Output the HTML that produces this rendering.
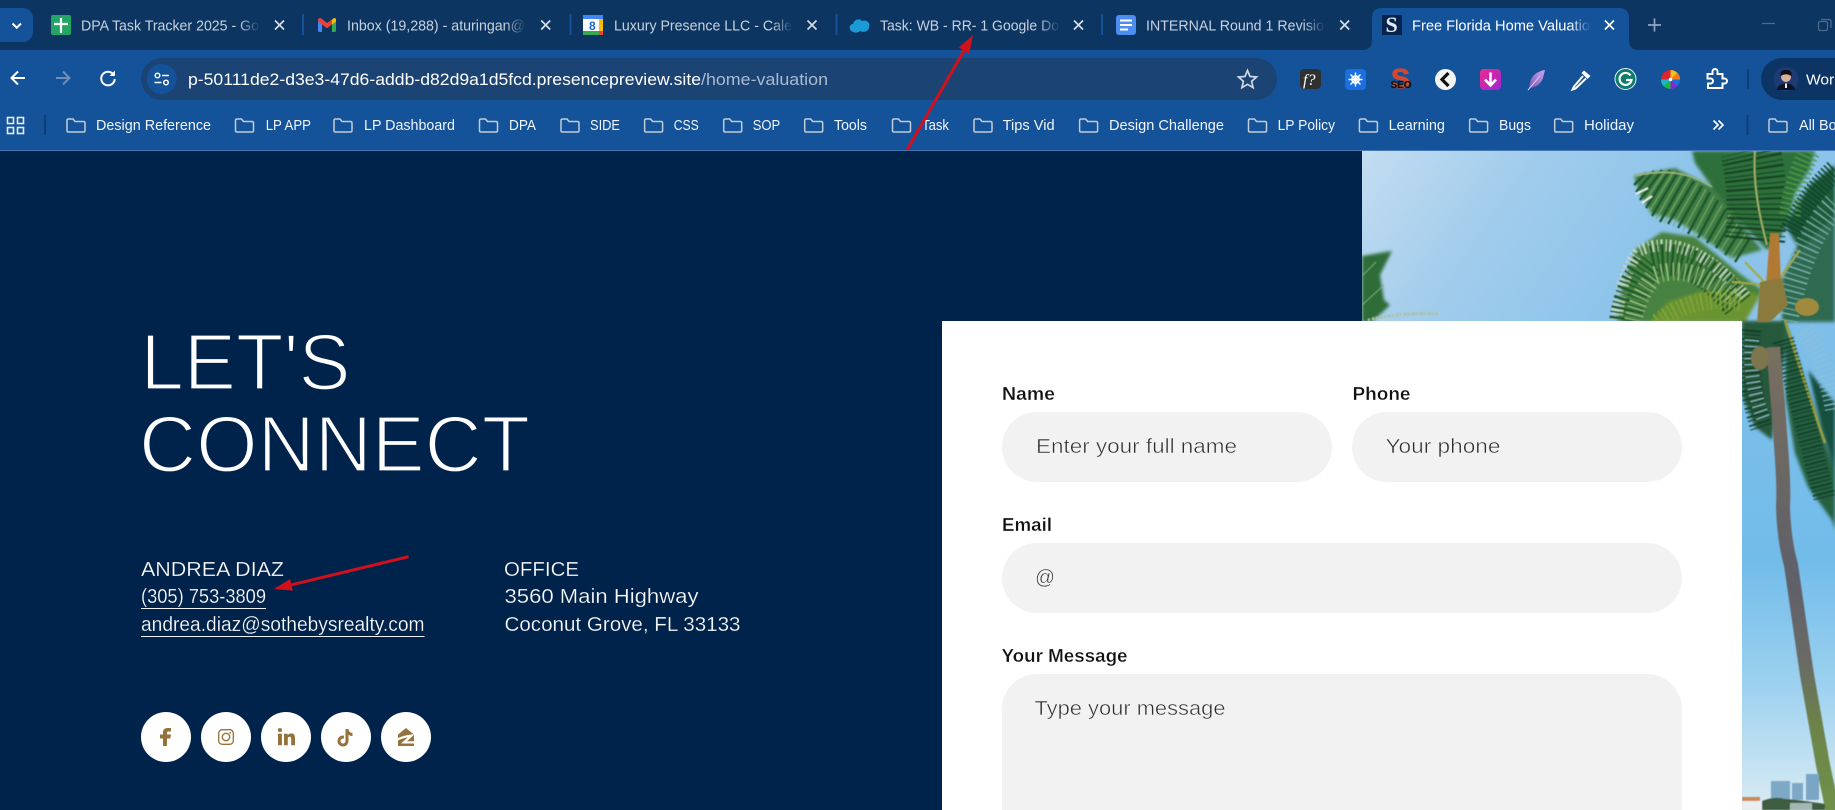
<!DOCTYPE html>
<html lang="en"><head><meta charset="utf-8"><title>Free Florida Home Valuation</title>
<style>
html,body{margin:0;padding:0;background:#00234b;width:1835px;height:810px;overflow:hidden}
svg{display:block;position:absolute;left:0;top:0}
text{font-family:"Liberation Sans","DejaVu Sans",sans-serif;white-space:pre}
.tab{font-size:14.5px;fill:#c6d1dd}
.bm{font-size:14.5px;fill:#f2f5f9}
.ct{font-size:20px;fill:#fff;stroke:#00234b;stroke-width:.25px}
.lb{font-size:18px;fill:#111;font-weight:bold;stroke:#fff;stroke-width:.3px}
.ph{font-size:20px;fill:#2e2e2e;stroke:#f2f2f2;stroke-width:.5px}
.h1{font-size:80px;fill:#fff;stroke:#00234b;stroke-width:2.2px}
</style></head><body>
<svg width="1835" height="810" viewBox="0 0 1835 810" xmlns="http://www.w3.org/2000/svg">
<defs>
<filter id="b" x="-10%" y="-10%" width="120%" height="120%"><feGaussianBlur stdDeviation=".6"/></filter>
<filter id="b2" x="-10%" y="-10%" width="120%" height="120%"><feGaussianBlur stdDeviation="1.6"/></filter>
<linearGradient id="sky1" gradientUnits="userSpaceOnUse" x1="1362" y1="150" x2="1620" y2="322"><stop offset="0" stop-color="#c4ddf1"/><stop offset=".45" stop-color="#a2cdec"/><stop offset="1" stop-color="#8bc3ea"/></linearGradient>
<linearGradient id="sky2" gradientUnits="userSpaceOnUse" x1="0" y1="321" x2="0" y2="800"><stop offset="0" stop-color="#7fbfe9"/><stop offset=".5" stop-color="#72bcea"/><stop offset=".75" stop-color="#9bd0ef"/><stop offset="1" stop-color="#d4e9f3"/></linearGradient>
<linearGradient id="trunk" gradientUnits="userSpaceOnUse" x1="0" y1="340" x2="0" y2="810"><stop offset="0" stop-color="#7a7060"/><stop offset=".5" stop-color="#5f6068"/><stop offset=".68" stop-color="#6a6a66"/><stop offset=".82" stop-color="#6d8348"/><stop offset="1" stop-color="#6f9148"/></linearGradient>
<linearGradient id="fadeA" x1="0" x2="1"><stop offset="0" stop-color="#0d3561" stop-opacity="0"/><stop offset="1" stop-color="#0d3561"/></linearGradient>
<linearGradient id="fadeB" x1="0" x2="1"><stop offset="0" stop-color="#14529a" stop-opacity="0"/><stop offset="1" stop-color="#14529a"/></linearGradient>
<linearGradient id="pink" x1="0" y1="0" x2="1" y2="1"><stop offset="0" stop-color="#ee2a8e"/><stop offset="1" stop-color="#a024d4"/></linearGradient>
<linearGradient id="fth" x1="1" y1="0" x2="0" y2="1"><stop offset="0" stop-color="#c9a8ee"/><stop offset="1" stop-color="#7a55b8"/></linearGradient>
<clipPath id="photo"><rect x="1362" y="151" width="473" height="659"/></clipPath>
<symbol id="fd" viewBox="0 0 20 15" width="20" height="15"><path d="M1 2.5Q1 1 2.5 1H7L9 3.5H17.5Q19 3.5 19 5V12.5Q19 14 17.5 14H2.5Q1 14 1 12.5Z" fill="none" stroke="#c4ccd6" stroke-width="1.5"/></symbol>
<symbol id="x" viewBox="0 0 12 12" width="12" height="12"><path d="M1.5 1.5L10.5 10.5M10.5 1.5L1.5 10.5" stroke="currentColor" stroke-width="1.7" fill="none"/></symbol>
</defs>

<!-- page background -->
<rect width="1835" height="810" fill="#00234b"/>

<!-- photo -->
<g clip-path="url(#photo)">
<rect x="1362" y="150" width="473" height="172" fill="url(#sky1)"/>
<rect x="1742" y="321" width="93" height="489" fill="url(#sky2)"/>
<g filter="url(#b2)">
 <path d="M1692 151H1815L1809 170 1795 193 1789 217 1779 240 1767 250 1755 237 1735 217 1712 187 1695 163Z" fill="#2d6f3a"/>
 <path d="M1762 250L1712 187 1675 168 1634 176 1640 194 1652 214 1672 218 1695 232 1732 258Z" fill="#3f7d45"/>
 <path d="M1762 290L1739 273 1695 237 1662 232 1635 250 1622 290 1617 322H1745Z" fill="#47823f"/>
 <path d="M1650 322L1668 302 1705 290 1739 288 1760 296 1745 322Z" fill="#6b9433"/>
 <path d="M1782 322V280L1800 240 1835 205V322Z" fill="#2f6a50"/>
 <path d="M1785 225L1810 185 1835 165V215L1800 250Z" fill="#1f5a38"/>
 <path d="M1362 256L1392 251 1380 275 1384 300 1390 305 1372 322H1362Z" fill="#2f6c38"/>
 <path d="M1742 321H1785V350L1778 390 1772 440 1755 427 1742 395Z" fill="#28583a"/>
 <path d="M1785 321L1802 370 1825 443 1835 470V530L1832 520 1808 487 1795 453 1786 400Z" fill="#27603f"/>
 <path d="M1808 370L1835 403V470L1822 430Z" fill="#17503e"/>
</g>
<g filter="url(#b)" fill="none">
 <!-- upper-left frond leaflets -->
 <path d="M1750 238L1735 262M1742 228L1725 255M1734 218L1716 248M1726 209L1707 243M1718 200L1698 238M1710 192L1688 234M1702 186L1678 228M1694 181L1668 224M1686 176L1660 222M1678 172L1652 216M1670 170L1646 208M1662 170L1640 200M1654 171L1636 192M1646 173L1634 185" stroke="#1b572b" stroke-width="2.4"/>
 <path d="M1746 233L1730 258M1738 223L1720 251M1730 214L1711 245M1722 205L1702 240M1714 196L1693 236M1706 189L1683 231M1698 183L1673 226M1690 178L1664 223M1682 174L1656 219M1674 171L1649 212M1666 170L1643 204" stroke="#79ad68" stroke-width="1.1"/>
 <path d="M1712 187Q1680 165 1634 176" stroke="#9fb878" stroke-width="1.6"/>
 <path d="M1648 188L1636 194M1652 196L1642 203" stroke="#eef4f0" stroke-width="2"/>
 <path d="M1755 240Q1760 190 1750 150" stroke="#123f22" stroke-width="60" stroke-dasharray="2 3 1 4"/>
 <path d="M1790 215Q1795 180 1810 150" stroke="#4f9a4a" stroke-width="22" stroke-dasharray="1.5 3.5"/>
 <path d="M1745 296Q1690 230 1640 250Q1622 270 1616 322" stroke="#c7dac0" stroke-width="12" stroke-dasharray="1.2 3 2 2.5"/>
 <path d="M1738 305Q1695 250 1650 262Q1630 285 1625 322" stroke="#1f5a2a" stroke-width="32" stroke-dasharray="1.5 3 2.5 2.5"/>
 <path d="M1735 300Q1695 262 1655 275Q1638 295 1633 322" stroke="#a0c488" stroke-width="18" stroke-dasharray="1 5 1.5 4"/>
 <path d="M1740 302Q1695 294 1658 322" stroke="#86a838" stroke-width="18" stroke-dasharray="1.5 3 1 4"/>
 <path d="M1835 205Q1800 240 1785 322" stroke="#7fb2b4" stroke-width="26" stroke-dasharray="1 4 1.5 5"/>
 <path d="M1835 170Q1808 195 1790 232" stroke="#0f4229" stroke-width="22" stroke-dasharray="1.5 2.5"/>
 <path d="M1755 150Q1752 190 1767 245" stroke="#a8b36a" stroke-width="1.8"/>
 <path d="M1767 285L1745 262M1767 285L1732 282M1775 285L1800 250" stroke="#a8a840" stroke-width="2"/>
 <path d="M1785 320Q1800 370 1825 443" stroke="#98a03a" stroke-width="2.5"/>
 <path d="M1783 340Q1800 400 1825 500" stroke="#0d3a2a" stroke-width="22" stroke-dasharray="1.5 2.4 1 3"/>
 <path d="M1805 330Q1826 360 1835 410" stroke="#8fc0d4" stroke-width="20" stroke-dasharray="1.4 3.5 1 4"/>
 <path d="M1750 330Q1745 380 1762 430" stroke="#0f3822" stroke-width="22" stroke-dasharray="1.5 2.5 1 3.5"/>
 <path d="M1752 340Q1748 380 1764 420" stroke="#a6cfe4" stroke-width="14" stroke-dasharray="1 5"/>
 <path d="M1376 262L1362 276M1384 285L1362 305" stroke="#7fae7c" stroke-width="1"/>
 <path d="M1368 320Q1400 312 1438 314" stroke="#a9c2a6" stroke-width="3" stroke-dasharray="2 2 3 1"/>
</g>
<g filter="url(#b)">
 <path d="M1773 347Q1778 400 1782 460Q1784 490 1783 507Q1784 540 1791 565L1807 675 1823 765 1833 812" fill="none" stroke="url(#trunk)" stroke-width="14"/>
 <path d="M1770 233H1779L1781 285H1766Z" fill="#b07a35"/>
 <path d="M1760 282L1782 278 1788 305 1770 322H1757Z" fill="#8a7a3c"/>
 <ellipse cx="1807" cy="307" rx="12" ry="9" fill="#a08a3c"/>
 <ellipse cx="1760" cy="358" rx="9" ry="12" fill="#7d7650"/>
 <rect x="1771" y="781" width="19" height="19" fill="#7da8c6"/>
 <rect x="1792" y="783" width="11" height="17" fill="#7da8c6"/>
 <rect x="1806" y="774" width="13" height="26" fill="#7aa5c5"/>
 <rect x="1742" y="797" width="18" height="4" fill="#c98a5a"/>
 <rect x="1742" y="801" width="24" height="9" fill="#e8eef2"/>
 <path d="M1762 810V801Q1775 796 1785 799Q1800 800 1825 804V810Z" fill="#3e5c3f"/>
 <rect x="1790" y="803" width="22" height="7" fill="#cfdde5" opacity=".7"/>
</g>
</g>

<!-- form card -->
<rect x="942" y="321" width="800" height="489" fill="#fff"/>
<rect x="1002" y="412" width="330" height="70" rx="35" fill="#f2f2f2"/>
<rect x="1352" y="412" width="330" height="70" rx="35" fill="#f2f2f2"/>
<rect x="1002" y="543" width="680" height="70" rx="35" fill="#f2f2f2"/>
<path d="M1002 810V709A35 35 0 0 1 1037 674H1647A35 35 0 0 1 1682 709V810Z" fill="#f2f2f2"/>
<text class="lb" x="1002" y="400" textLength="53" lengthAdjust="spacingAndGlyphs">Name</text>
<text class="lb" x="1352.5" y="400" textLength="58" lengthAdjust="spacingAndGlyphs">Phone</text>
<text class="lb" x="1002" y="531" textLength="50" lengthAdjust="spacingAndGlyphs">Email</text>
<text class="lb" x="1001.5" y="662" textLength="126" lengthAdjust="spacingAndGlyphs">Your Message</text>
<text class="ph" x="1036" y="453" textLength="201" lengthAdjust="spacingAndGlyphs">Enter your full name</text>
<text class="ph" x="1385.5" y="453" textLength="115" lengthAdjust="spacingAndGlyphs">Your phone</text>
<text class="ph" x="1035" y="584" textLength="20" lengthAdjust="spacingAndGlyphs">@</text>
<text class="ph" x="1034.5" y="715" textLength="191" lengthAdjust="spacingAndGlyphs">Type your message</text>

<!-- left content -->
<text class="h1" x="140.5" y="389.5" textLength="210" lengthAdjust="spacingAndGlyphs">LET'S</text>
<text class="h1" x="139" y="471.5" textLength="391" lengthAdjust="spacingAndGlyphs">CONNECT</text>
<text class="ct" x="141" y="576" textLength="143" lengthAdjust="spacingAndGlyphs">ANDREA DIAZ</text>
<text class="ct" x="141" y="603" textLength="125" lengthAdjust="spacingAndGlyphs">(305) 753-3809</text>
<rect x="141" y="608" width="125" height="1" fill="#eef0f2"/>
<text class="ct" x="141" y="631" textLength="283.5" lengthAdjust="spacingAndGlyphs">andrea.diaz@sothebysrealty.com</text>
<rect x="141" y="636" width="283.5" height="1" fill="#eef0f2"/>
<text class="ct" x="504" y="576" textLength="75" lengthAdjust="spacingAndGlyphs">OFFICE</text>
<text class="ct" x="504.5" y="603" textLength="194" lengthAdjust="spacingAndGlyphs">3560 Main Highway</text>
<text class="ct" x="504.5" y="631" textLength="236" lengthAdjust="spacingAndGlyphs">Coconut Grove, FL 33133</text>

<!-- social -->
<g fill="#fff"><circle cx="166" cy="737" r="25"/><circle cx="226" cy="737" r="25"/><circle cx="286" cy="737" r="25"/><circle cx="346" cy="737" r="25"/><circle cx="406" cy="737" r="25"/></g>
<g fill="#96713a">
<path d="M163 746V738.5H160V734.5H163V732.5C163 729.5 165 728 167.5 728H171V731.5H168.5C167.5 731.5 167 732 167 733V734.5H171L170.3 738.5H167V746Z"/>
<g fill="none" stroke="#96713a" stroke-width="1.3"><rect x="218.7" y="729.7" width="14.6" height="14.6" rx="3.6"/><circle cx="226" cy="737" r="3.7"/></g><circle cx="230.2" cy="732.8" r=".9"/>
<rect x="278" y="733.7" width="3.9" height="11.5"/><rect x="278" y="728.2" width="3.9" height="3.7" rx="1"/>
<path d="M284 733.7H287.7V735.4C288.5 734.2 289.8 733.4 291.3 733.4C294.2 733.4 295 735.4 295 738.3V745.2H291.2V739.2C291.2 737.7 290.8 736.7 289.6 736.7C288.2 736.7 287.8 737.8 287.8 739.3V745.2H284Z"/>
<path d="M345.5 729H348.5C348.7 731.4 350.3 732.9 352.5 733V736C351 736 349.6 735.5 348.5 734.7V741A5.5 5.5 0 1 1 343 735.5C343.3 735.5 343.6 735.5 343.9 735.6V738.7A2.5 2.5 0 1 0 345.5 741Z"/>
<path d="M406 728L414 734.6V746H398V734.6Z"/>
<path d="M395 740.6Q403 736.4 411.5 735.6L404 742.4H417" fill="none" stroke="#fff" stroke-width="2.3"/>
</g>

<!-- browser chrome -->
<rect width="1835" height="50" fill="#0d3561"/>
<rect y="50" width="1835" height="100" fill="#14529a"/>
<rect y="150" width="1835" height="1" fill="#4377b8"/>
<path d="M0 8H23A10 10 0 0 1 33 18V32A10 10 0 0 1 23 42H0Z" fill="#14529a"/>
<path d="M12.5 23.5L16.7 27.7 21 23.5" fill="none" stroke="#fff" stroke-width="2"/>

<!-- active tab -->
<path d="M1362 50Q1372 50 1372 40V18Q1372 8 1382 8H1619Q1629 8 1629 18V40Q1629 50 1639 50Z" fill="#14529a"/>

<g fill="#14529a"><rect x="302" y="14" width="2" height="21"/><rect x="569.5" y="14" width="2" height="21"/><rect x="835.5" y="14" width="2" height="21"/><rect x="1101" y="14" width="2" height="21"/></g>

<!-- favicons -->
<rect x="51" y="15" width="20" height="20" rx="2" fill="#23a566"/><path d="M61 18V33M54 24H68" stroke="#fff" stroke-width="2.2"/>
<path d="M318 20.5H322V32H319.5Q318 32 318 30.5Z" fill="#4285f4"/><path d="M332 20.5H336V30.5Q336 32 334.5 32H332Z" fill="#34a853"/>
<path d="M318 21.5V19Q319.5 17.5 321.5 18.6L327 23 332 19.5 332 24.5 327 28.2Z" fill="#ea4335"/><path d="M332 19.5L333 18.6Q335 17.5 336 19V21.5L332 24.5Z" fill="#fbbc04"/>
<rect x="583" y="15" width="20" height="20" rx="2" fill="#fff"/><rect x="583" y="15" width="20" height="4" fill="#4285f4"/><rect x="583" y="31" width="16" height="4" fill="#34a853"/><rect x="599" y="19" width="4" height="12" fill="#fbbc04"/><rect x="599" y="31" width="4" height="4" fill="#ea4335"/>
<text x="589" y="30" style="font-size:12px;font-weight:bold;fill:#1a66d2">8</text>
<path d="M853 32C848 30 849 24 853 24C854 19 860 18 862 21C866 19 871 23 869 27C869 31 864 33 860 31C858 33 855 33 853 32Z" fill="#1a9bd7"/>
<rect x="1116" y="15" width="20" height="20" rx="3" fill="#4f8cf0"/><path d="M1120 20.5H1132M1120 25H1132M1120 29.5H1128" stroke="#fff" stroke-width="2"/>
<rect x="1382" y="15" width="20" height="20" fill="#06244e"/><text x="1385.5" y="32" style="font-family:'Liberation Serif',serif;font-size:22px;font-weight:bold;fill:#e6ebf2">S</text>

<!-- tab titles -->
<text class="tab" x="81" y="30.5" textLength="178" lengthAdjust="spacingAndGlyphs">DPA Task Tracker 2025 - Go</text>
<text class="tab" x="347" y="30.5" textLength="178" lengthAdjust="spacingAndGlyphs">Inbox (19,288) - aturingan@</text>
<text class="tab" x="614" y="30.5" textLength="178" lengthAdjust="spacingAndGlyphs">Luxury Presence LLC - Cale</text>
<text class="tab" x="880" y="30.5" textLength="179" lengthAdjust="spacingAndGlyphs">Task: WB - RR- 1 Google Do</text>
<text class="tab" x="1146" y="30.5" textLength="178" lengthAdjust="spacingAndGlyphs">INTERNAL Round 1 Revisio</text>
<text class="tab" x="1412" y="30.5" textLength="178" lengthAdjust="spacingAndGlyphs" style="fill:#fff">Free Florida Home Valuatio</text>
<rect x="239" y="15" width="21" height="22" fill="url(#fadeA)"/><rect x="505" y="15" width="21" height="22" fill="url(#fadeA)"/><rect x="772" y="15" width="21" height="22" fill="url(#fadeA)"/><rect x="1039" y="15" width="21" height="22" fill="url(#fadeA)"/><rect x="1304" y="15" width="21" height="22" fill="url(#fadeA)"/><rect x="1570" y="15" width="21" height="22" fill="url(#fadeB)"/>
<g style="color:#d5dde6">
<use href="#x" x="273.5" y="19"/><use href="#x" x="539.7" y="19"/><use href="#x" x="806" y="19"/><use href="#x" x="1072.5" y="19"/><use href="#x" x="1338.7" y="19"/></g>
<use href="#x" x="1603.4" y="19" style="color:#fff"/>
<path d="M1654.5 18.5V31.5M1648 25H1661" stroke="#8ea6c2" stroke-width="1.7"/>
<path d="M1762 23.5H1775" stroke="#4d6b8e" stroke-width="1.2"/>
<g fill="none" stroke="#4d6b8e" stroke-width="1.2"><rect x="1818.5" y="21.5" width="9" height="9" rx="1.5"/><path d="M1821 19.5H1829Q1831 19.5 1831 21.5V28"/></g>

<!-- toolbar -->
<path d="M25 78H12M18 71.5L11.5 78 18 84.5" fill="none" stroke="#fff" stroke-width="2"/>
<path d="M56 78H69M63 71.5L69.5 78 63 84.5" fill="none" stroke="#6f8fb8" stroke-width="2"/>
<path d="M113.5 74.5A6.8 6.8 0 1 0 114.8 79" fill="none" stroke="#fff" stroke-width="2"/><path d="M115 70.5V76H109.5Z" fill="#fff"/>
<rect x="141" y="58" width="1136" height="42" rx="21" fill="#1b4373"/>
<circle cx="161.7" cy="79" r="15" fill="#14529a"/>
<g fill="none" stroke="#fff" stroke-width="1.5"><circle cx="157.5" cy="75.5" r="2.3"/><path d="M162 75.5H169"/><circle cx="166" cy="82.5" r="2.3"/><path d="M154.5 82.5H161.5"/></g>
<text x="188" y="85" textLength="513" lengthAdjust="spacingAndGlyphs" style="font-size:17px;fill:#fff">p-50111de2-d3e3-47d6-addb-d82d9a1d5fcd.presencepreview.site</text>
<text x="701" y="85" textLength="127" lengthAdjust="spacingAndGlyphs" style="font-size:17px;fill:#a8bbd0">/home-valuation</text>
<path d="M1247.5 70.5L1250 76.5 1256.5 77 1251.6 81.3 1253.1 87.6 1247.5 84.3 1241.9 87.6 1243.4 81.3 1238.5 77 1245 76.5Z" fill="none" stroke="#cfd8e3" stroke-width="1.7"/>

<!-- extensions -->
<rect x="1300" y="69" width="21" height="20" rx="4" fill="#2f3032"/>
<text x="1303" y="85" style="font-family:'Liberation Serif',serif;font-style:italic;font-size:16px;fill:#fff">f?</text>
<rect x="1345" y="69" width="21" height="21" rx="4" fill="#1c6fe3"/>
<g stroke="#fff" stroke-width="1.5" fill="none"><circle cx="1355.5" cy="79.5" r="3.6"/><path d="M1355.5 72.5V86.5M1348.5 79.5H1362.5M1350.5 74.5L1360.5 84.5M1360.5 74.5L1350.5 84.5"/></g>
<text x="1391" y="88" textLength="19" lengthAdjust="spacingAndGlyphs" style="font-size:28px;font-weight:bold;fill:#d5472f;stroke:#d5472f;stroke-width:.8px">S</text>
<text x="1390.5" y="88" textLength="21" lengthAdjust="spacingAndGlyphs" style="font-size:10.5px;font-weight:bold;fill:#111;stroke:#111;stroke-width:.3px">SEO</text>
<circle cx="1445.5" cy="79.5" r="10.5" fill="#f4f4f4"/><path d="M1448.5 73L1442 79.5 1448.5 86" fill="none" stroke="#111" stroke-width="3.2"/>
<rect x="1480" y="69" width="21" height="21" rx="4" fill="url(#pink)"/><path d="M1490.5 72.5V84.5M1485 79.5L1490.5 85.5 1496 79.5" fill="none" stroke="#fff" stroke-width="2.5"/>
<path d="M1545 70C1538 71 1532 75 1530 82L1529 88C1535 88 1541 84 1543 78Z" fill="url(#fth)"/><path d="M1528 90L1540 76" stroke="#d9c4f2" stroke-width="1"/>
<g fill="none" stroke="#fff" stroke-width="2"><path d="M1583 76L1574 86.5 1572.5 89.5 1575.5 88.5 1586 78.5"/></g><path d="M1584 70.5L1590.5 76 1587.5 79 1581.5 73Z" fill="#fff"/>
<circle cx="1625.5" cy="79" r="10.5" fill="#0f7b6c" stroke="#e6f1ee" stroke-width="1"/><path d="M1630.5 75.5A6 6 0 1 0 1631.5 80H1626" fill="none" stroke="#fff" stroke-width="2.2"/>
<g><path d="M1670.5 79.5V70A9.5 9.5 0 0 1 1680 79.5Z" fill="#f2c21a"/><path d="M1670.5 79.5H1680A9.5 9.5 0 0 1 1670.5 89Z" fill="#1a6fe0"/><path d="M1670.5 79.5V89A9.5 9.5 0 0 1 1661 79.5Z" fill="#19b84a"/><path d="M1670.5 79.5H1661A9.5 9.5 0 0 1 1670.5 70Z" fill="#e0242e"/><path d="M1670.5 79.5L1677.2 72.8A9.5 9.5 0 0 1 1680 79.5Z" fill="#f47a1a"/><path d="M1670.5 79.5L1663.8 86.2A9.5 9.5 0 0 1 1661 79.5Z" fill="#1fb5c9"/><path d="M1670.5 79.5L1677.2 86.2A9.5 9.5 0 0 1 1670.5 89Z" fill="#8a28c8"/><circle cx="1670.5" cy="79.5" r="1.8" fill="#fff"/></g>
<path d="M1707.5 74H1712.5V71.5A2.3 2.3 0 0 1 1717.5 71.5V74H1722.5V78.5H1724.5A2.3 2.3 0 0 1 1724.5 83.5H1722.5V88H1708V83.5H1710.5A2.3 2.3 0 0 0 1710.5 78.5H1707.5Z" fill="none" stroke="#fff" stroke-width="2"/>
<rect x="1747" y="69" width="2" height="20" fill="#0f3d74"/>
<path d="M1835 58H1782A21 21 0 0 0 1782 100H1835Z" fill="#0c3565"/>
<circle cx="1786" cy="79" r="12.5" fill="#1d3a72"/>
<circle cx="1786" cy="77" r="5" fill="#d9b298"/><path d="M1780.5 76Q1780 69.5 1786 70Q1792 69.5 1791.5 76Q1786 72.5 1780.5 76Z" fill="#0f0f14"/>
<path d="M1777 90Q1778 83.5 1786 83.5Q1794 83.5 1795 90Z" fill="#0d1424"/><path d="M1785 83.5H1787V88H1785Z" fill="#e9edf2"/>
<text x="1806" y="84.5" textLength="36" lengthAdjust="spacingAndGlyphs" style="font-size:15px;fill:#fff">Work</text>

<!-- bookmarks -->
<g fill="none" stroke="#e6ebf2" stroke-width="1.6"><rect x="7.5" y="117.5" width="6" height="6"/><rect x="17.5" y="117.5" width="6" height="6"/><rect x="7.5" y="127.5" width="6" height="6"/><rect x="17.5" y="127.5" width="6" height="6"/></g>
<rect x="44" y="115" width="2" height="20" fill="#0f3d74"/>
<use href="#fd" x="66" y="118"/><text class="bm" x="96" y="130" textLength="115" lengthAdjust="spacingAndGlyphs">Design Reference</text>
<use href="#fd" x="234.5" y="118"/><text class="bm" x="265.7" y="130" textLength="45.3" lengthAdjust="spacingAndGlyphs">LP APP</text>
<use href="#fd" x="333" y="118"/><text class="bm" x="364" y="130" textLength="91" lengthAdjust="spacingAndGlyphs">LP Dashboard</text>
<use href="#fd" x="478.5" y="118"/><text class="bm" x="509" y="130" textLength="27" lengthAdjust="spacingAndGlyphs">DPA</text>
<use href="#fd" x="560" y="118"/><text class="bm" x="590" y="130" textLength="30" lengthAdjust="spacingAndGlyphs">SIDE</text>
<use href="#fd" x="643.6" y="118"/><text class="bm" x="673.7" y="130" textLength="25" lengthAdjust="spacingAndGlyphs">CSS</text>
<use href="#fd" x="722.7" y="118"/><text class="bm" x="752.7" y="130" textLength="27.5" lengthAdjust="spacingAndGlyphs">SOP</text>
<use href="#fd" x="803.7" y="118"/><text class="bm" x="834" y="130" textLength="33" lengthAdjust="spacingAndGlyphs">Tools</text>
<use href="#fd" x="891.5" y="118"/><text class="bm" x="922" y="130" textLength="27" lengthAdjust="spacingAndGlyphs">Task</text>
<use href="#fd" x="973" y="118"/><text class="bm" x="1002.6" y="130" textLength="52" lengthAdjust="spacingAndGlyphs">Tips Vid</text>
<use href="#fd" x="1078.6" y="118"/><text class="bm" x="1109" y="130" textLength="115" lengthAdjust="spacingAndGlyphs">Design Challenge</text>
<use href="#fd" x="1247.5" y="118"/><text class="bm" x="1277.6" y="130" textLength="57.4" lengthAdjust="spacingAndGlyphs">LP Policy</text>
<use href="#fd" x="1358.4" y="118"/><text class="bm" x="1388.6" y="130" textLength="56.4" lengthAdjust="spacingAndGlyphs">Learning</text>
<use href="#fd" x="1468.6" y="118"/><text class="bm" x="1499" y="130" textLength="32" lengthAdjust="spacingAndGlyphs">Bugs</text>
<use href="#fd" x="1553.7" y="118"/><text class="bm" x="1584" y="130" textLength="50" lengthAdjust="spacingAndGlyphs">Holiday</text>
<path d="M1713.5 120.5L1718 125 1713.5 129.5M1718.5 120.5L1723 125 1718.5 129.5" fill="none" stroke="#fff" stroke-width="1.7"/>
<rect x="1746.5" y="115" width="2" height="20" fill="#0f3d74"/>
<use href="#fd" x="1768" y="118"/><text class="bm" x="1799" y="130" textLength="92" lengthAdjust="spacingAndGlyphs">All Bookmarks</text>

<!-- annotation arrows -->
<g fill="#d2101c"><path d="M907 150L964 50.6" stroke="#d2101c" stroke-width="3" fill="none"/><path d="M973 35L969.2 53.6 958.8 47.6Z"/>
<path d="M408.6 556.7L291.5 584.8" stroke="#d2101c" stroke-width="3" fill="none"/><path d="M274 589L292.9 590.6 290.1 579Z"/></g>
</svg>
</body></html>
